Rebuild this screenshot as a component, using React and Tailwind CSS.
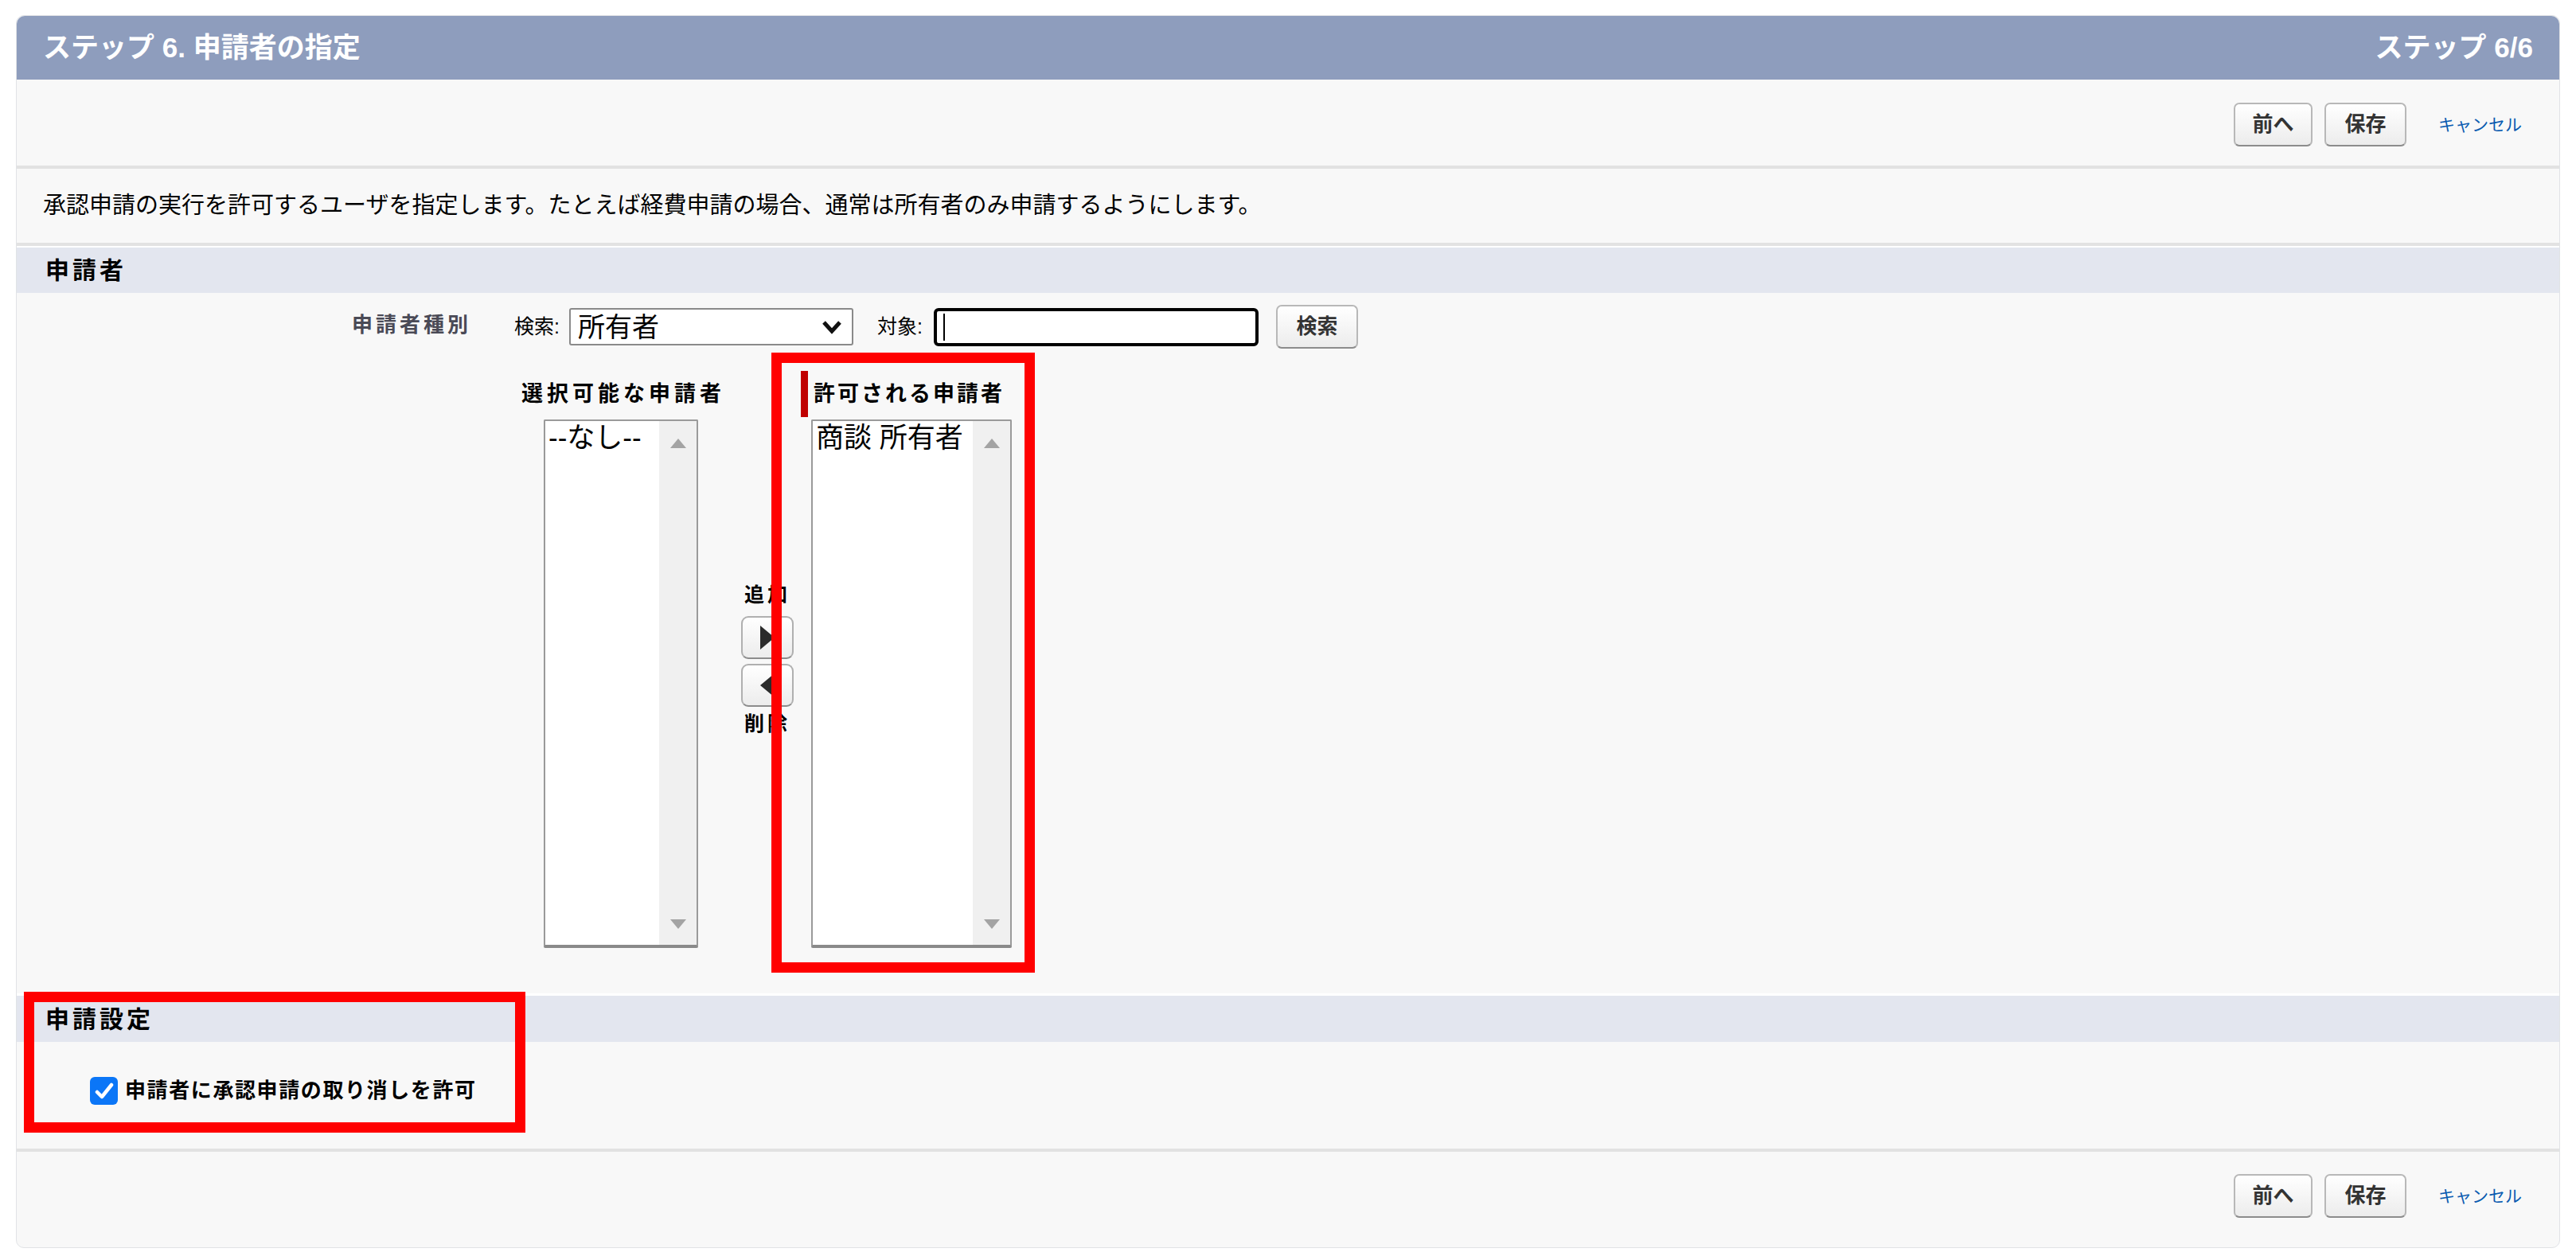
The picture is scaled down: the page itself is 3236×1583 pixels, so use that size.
import React from "react";

function Btn({ children, w }) {
  return (
    <button
      className={`h-[55px] ${w} rounded-[7px] border-2 border-[#b8b8b8] border-b-[#8c8c8c] bg-linear-to-b from-white to-[#ececec] text-[26px] font-bold text-[#333] flex items-center justify-center`}
    >
      {children}
    </button>
  );
}

function ButtonRow({ top }) {
  return (
    <div className={`flex items-center justify-end pr-[47px] ${top}`}>
      <Btn w="w-[99px]">前へ</Btn>
      <div className="ml-[15px]">
        <Btn w="w-[103px]">保存</Btn>
      </div>
      <a href="#" className="ml-[40px] text-[21px] text-[#0a5bb0] leading-none">
        キャンセル
      </a>
    </div>
  );
}

function ListBox({ w, item }) {
  return (
    <div className={`${w} h-[664px] flex bg-white border-2 border-[#9a9a9a] border-b-[4px] border-b-[#8a8a8a] rounded-[2px]`}>
      <div className="flex-1 pl-[4px] text-[35px] leading-[42px] text-black whitespace-nowrap">{item}</div>
      <div className="w-[47px] bg-[#f0f0f0] flex flex-col items-center justify-between pt-[22px] pb-[20px]">
        <svg width="20" height="12" viewBox="0 0 20 12">
          <polygon points="10,0 20,12 0,12" fill="#a3a3a3" />
        </svg>
        <svg width="20" height="12" viewBox="0 0 20 12">
          <polygon points="0,0 20,0 10,12" fill="#a3a3a3" />
        </svg>
      </div>
    </div>
  );
}

function ArrowBtn({ dir }) {
  return (
    <div className="w-[66px] h-[54px] rounded-[9px] border-2 border-[#b0b0b0] border-b-[#8c8c8c] bg-linear-to-b from-white to-[#ececec] flex items-center justify-center">
      <svg width="22" height="30" viewBox="0 0 22 30">
        {dir === "right" ? (
          <polygon points="2,0 20,15 2,30" fill="#2b2b2b" />
        ) : (
          <polygon points="20,0 2,15 20,30" fill="#2b2b2b" />
        )}
      </svg>
    </div>
  );
}

export default function App() {
  return (
    <div className="min-h-screen bg-white pt-[19px] px-[20px] font-['Liberation_Sans','Noto_Sans_CJK_JP',sans-serif]">
      <div className="rounded-[10px] border border-[#e1e3e6] bg-[#f8f8f8]">
        {/* Title bar */}
        <div className="h-[80px] rounded-t-[10px] bg-[#8e9dbd] flex items-center justify-between px-[33px] text-white font-bold text-[35px]">
          <span>ステップ 6. 申請者の指定</span>
          <span>ステップ 6/6</span>
        </div>

        <ButtonRow top="pt-[29px] pb-[24px]" />
        <div className="h-[4px] bg-[#e2e2e2]" />

        {/* Description */}
        <div className="h-[93px] flex items-center pl-[33px] text-[29px] text-black">
          承認申請の実行を許可するユーザを指定します。たとえば経費申請の場合、通常は所有者のみ申請するようにします。
        </div>
        <div className="h-[4px] bg-[#e2e2e2]" />

        {/* Section: 申請者 */}
        <div className="h-[59px] border-t-2 border-white bg-[#e3e6ef] flex items-center pl-[36px] text-[30px] font-bold tracking-[4px] text-black">
          申請者
        </div>

        <div className="pt-[15px]">
          <div className="flex items-start h-[55px]">
            <div className="w-[571px] pt-[6px] text-right text-[26px] font-bold tracking-[4px] text-[#4a4a56]">
              申請者種別
            </div>
            <div className="ml-[54px] h-[55px] flex items-center text-[25px] text-black">
              <span>検索:</span>
              <div className="ml-[12px] w-[357px] h-[47px] bg-white border-2 border-[#8a8a8a] rounded-[3px] flex items-center justify-between pl-[9px] pr-[12px]">
                <span className="text-[34px] leading-none">所有者</span>
                <svg width="26" height="18" viewBox="0 0 26 18">
                  <path d="M3 3 L13 14 L23 3" stroke="#111" strokeWidth="5" fill="none" />
                </svg>
              </div>
              <span className="ml-[30px]">対象:</span>
              <div className="ml-[14px] w-[408px] h-[48px] bg-white border-[4px] border-black rounded-[6px] flex items-center pl-[8px]">
                <div className="w-[2px] h-[34px] bg-black" />
              </div>
              <div className="ml-[22px]">
                <Btn w="w-[103px]">検索</Btn>
              </div>
            </div>
          </div>

          {/* Dual list */}
          <div className="mt-[28px] ml-[632px] flex items-start">
            <div className="w-[278px] flex flex-col">
              <div className="h-[58px] flex items-center ml-[2px] text-[27px] font-bold tracking-[5px] text-black">
                選択可能な申請者
              </div>
              <div className="mt-[3px] ml-[30px]">
                <ListBox w="w-[194px]" item="--なし--" />
              </div>
            </div>

            <div className="w-[66px] mr-[9px] pt-[266px] flex flex-col items-center text-[25px] font-bold tracking-[4px] text-black">
              <div className="leading-[30px]">追加</div>
              <div className="mt-[12px]">
                <ArrowBtn dir="right" />
              </div>
              <div className="mt-[6px]">
                <ArrowBtn dir="left" />
              </div>
              <div className="mt-[6px] leading-[30px]">削除</div>
            </div>

            <div className="relative flex flex-col">
              <div className="h-[58px] flex items-center">
                <div className="w-[9px] h-[58px] bg-[#c00000]" />
                <span className="ml-[7px] text-[27px] font-bold tracking-[3px] text-black">許可される申請者</span>
              </div>
              <div className="mt-[3px] ml-[13px]">
                <ListBox w="w-[252px]" item="商談 所有者" />
              </div>
              <div className="pointer-events-none absolute -left-[37px] -top-[23px] -right-[29px] -bottom-[31px] border-[13px] border-[#ff0000] z-10" />
            </div>
          </div>
        </div>

        {/* Section: 申請設定 */}
        <div className="relative mt-[57px]">
          <div className="h-[61px] border-t-[3px] border-white bg-[#e3e6ef] flex items-center pl-[36px] text-[30px] font-bold tracking-[4px] text-black">
            申請設定
          </div>
          <div className="pt-[42px] pb-[53px] pl-[92px] flex items-center">
            <div className="w-[35px] h-[35px] rounded-[6px] bg-[#0b76f7] flex items-center justify-center">
              <svg width="24" height="22" viewBox="0 0 24 22">
                <path d="M3 12 L9 18 L21 3" stroke="white" strokeWidth="4.5" fill="none" strokeLinecap="round" strokeLinejoin="round" />
              </svg>
            </div>
            <span className="ml-[9px] text-[26px] font-bold tracking-[1.6px] text-black">
              申請者に承認申請の取り消しを許可
            </span>
          </div>
          <div className="pointer-events-none absolute left-[9px] -top-[2px] w-[630px] h-[177px] border-[13px] border-[#ff0000] z-10" />
        </div>

        <div className="h-[4px] bg-[#e2e2e2]" />
        <ButtonRow top="pt-[28px] pb-[37px]" />
      </div>
    </div>
  );
}
